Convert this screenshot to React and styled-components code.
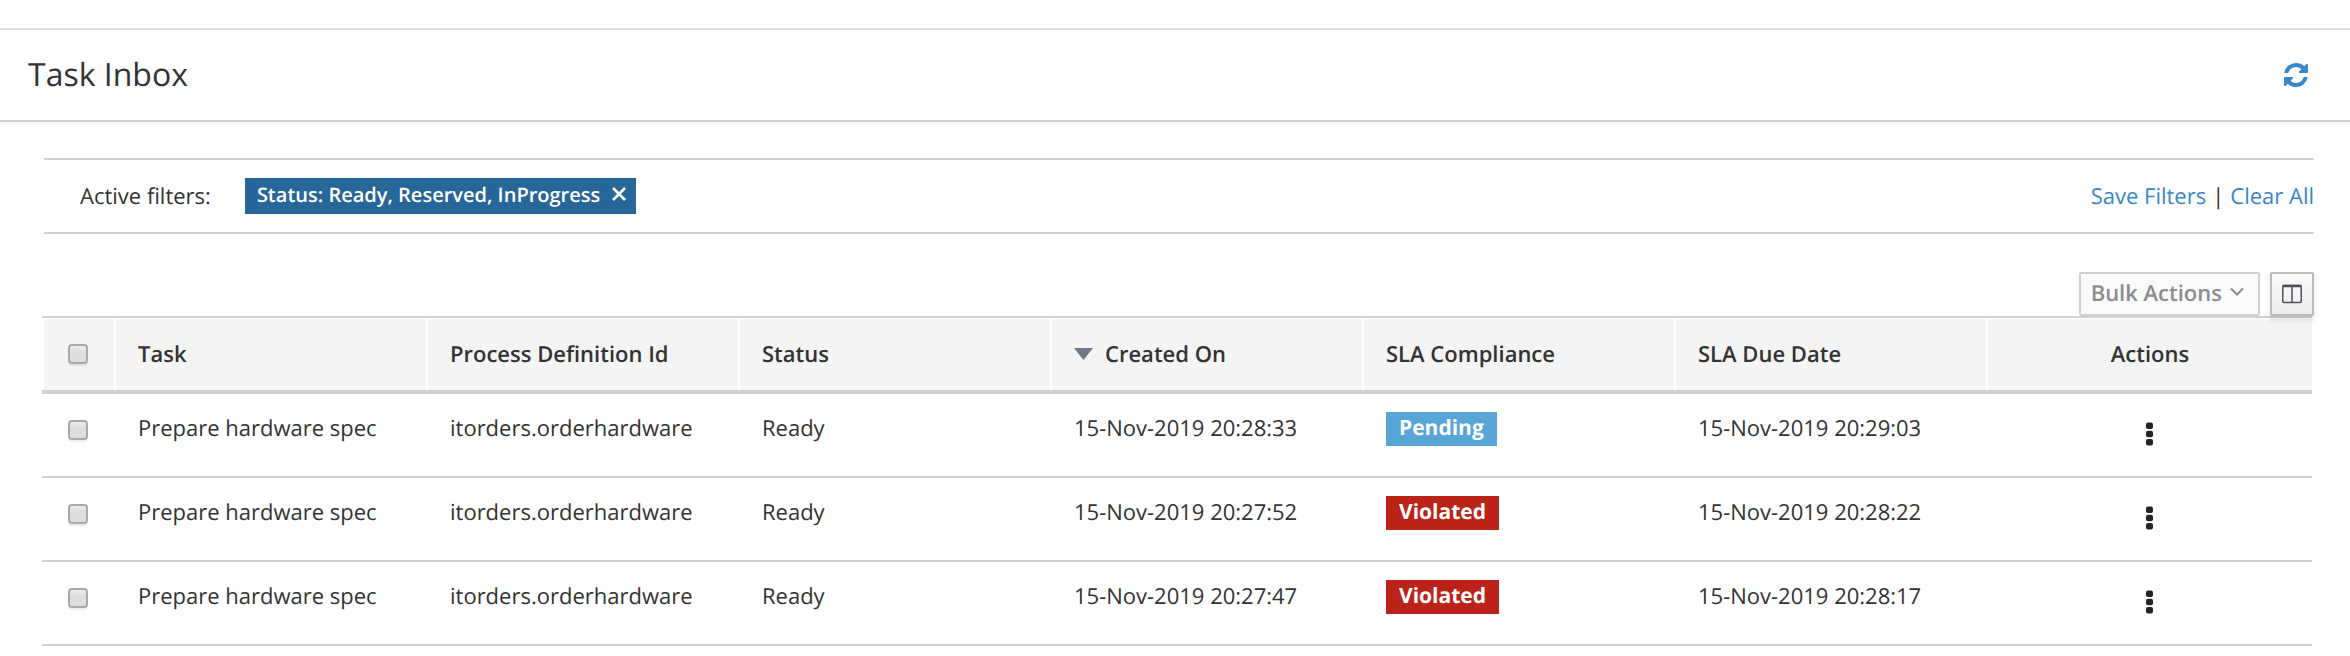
import React from "react";
import styled, { createGlobalStyle, css } from "styled-components";

const GlobalStyle = createGlobalStyle`
  * { box-sizing: border-box; }
  body {
    margin: 0;
    background: #fefefe;
    color: #333333;
    font-family: "Open Sans", "Noto Sans", sans-serif;
    font-size: 22px;
    line-height: 36px;
    text-rendering: geometricPrecision;
  }
  button { font: inherit; cursor: pointer; text-rendering: inherit; }
`;

const Page = styled.main`
  padding-top: 28px;
`;

const Header = styled.header`
  display: flex;
  align-items: center;
  justify-content: space-between;
  height: 94px;
  padding: 0 42px 0 28px;
  border-top: 2px solid #dddddd;
  border-bottom: 2px solid #d1d1d1;
  box-shadow: 0 2px 0 #f5f5f5;
`;

const Title = styled.h1`
  margin: 0;
  font-size: 32px;
  line-height: 40px;
  font-weight: 400;
`;

const PlainButton = styled.button`
  display: inline-flex;
  align-items: center;
  justify-content: center;
  padding: 0;
  border: 0;
  background: none;
  color: ${(p) => p.$color || "inherit"};
`;

const Filters = styled.section`
  display: flex;
  align-items: center;
  height: 76px;
  margin: 36px 36px 0 44px;
  padding-left: 36px;
  border-top: 2px solid #d1d1d1;
  border-bottom: 2px solid #d1d1d1;
`;

const Chip = styled.span`
  display: inline-flex;
  gap: 12px;
  height: 36px;
  margin-left: 34px;
  padding: 0 10px 0 12px;
  background: #276699;
  color: #fff;
  font-size: 20px;
  line-height: 34px;
  font-weight: 600;
`;

const CloseButton = styled(PlainButton)`
  height: 32px;
`;

const FilterLinks = styled.nav`
  display: flex;
  gap: 6px;
  margin-left: auto;
`;

const Link = styled.a`
  color: #3787c9;
  text-decoration: none;
`;

const Toolbar = styled.div`
  position: relative;
  display: flex;
  justify-content: flex-end;
  gap: 10px;
  margin: 38px 36px 0 42px;
`;

const ToolButton = styled.button`
  display: inline-flex;
  align-items: center;
  justify-content: center;
  gap: 8px;
  height: 44px;
  padding: 0 ${(p) => (p.$square ? "10px" : "14px 2px 10px")};
  border: 2px solid #bbbbbb;
  border-radius: 2px;
  background: linear-gradient(#fafafa, #ededed);
  box-shadow: 0 4px 6px rgba(3, 3, 3, 0.1);
  color: #4d5258;
  font-weight: 600;
  line-height: 36px;
  ${(p) => p.$square && css`width: 44px;`}
  &:disabled {
    border-color: #d1d1d1;
    background: #fafafa;
    box-shadow: none;
    color: #8b8d8f;
    cursor: default;
  }
`;

const TableArea = styled.div`
  padding: 0 38px 10px 42px;
`;

const Table = styled.table`
  width: 100%;
  table-layout: fixed;
  border-collapse: separate;
  border-spacing: 0;
`;

const CheckCol = styled.col`
  width: 72px;
`;

const ActionsCol = styled.col`
  width: 326px;
`;

const HeadCell = styled.th`
  height: 78px;
  padding: 0 ${(p) => (p.$center ? "22px" : "20px")} 1px 24px;
  border-top: 2px solid #d1d1d1;
  border-bottom: 4px solid #d1d1d1;
  background: linear-gradient(#fff, #fff) left / 2px 100% no-repeat, #f4f4f4;
  background-clip: padding-box;
  box-shadow: inset 0 1px 0 #fff;
  font-weight: 600;
  text-align: ${(p) => (p.$center ? "center" : "left")};
`;

const Cell = styled.td`
  height: 84px;
  padding: 16px ${(p) => (p.$center ? "24px" : "20px")} 0 24px;
  border-bottom: 2px solid #d1d1d1;
  vertical-align: top;
  text-align: ${(p) => (p.$center ? "center" : "left")};
`;

const SortLabel = styled.span`
  display: flex;
  align-items: center;
  gap: 12px;
`;

const Checkbox = styled.input.attrs({ type: "checkbox" })`
  appearance: none;
  display: block;
  width: 20px;
  height: 20px;
  margin: ${(p) => (p.$row ? "10px" : "0")} 0 0 2px;
  border: 2px solid #a9a9a9;
  border-radius: 4px;
  background: linear-gradient(#ededed, #dcdcdc 40%, #dedede);
  box-shadow: 0 2px 1px rgba(0, 0, 0, 0.08);
  &:checked { background: #3787c9; }
`;

const Badge = styled.span`
  display: inline-block;
  height: 34px;
  margin-top: 2px;
  padding: 0 13px;
  background: ${(p) => (p.$tone === "info" ? "#58a5d8" : "#bb2319")};
  color: #fff;
  font-size: 21px;
  line-height: 32px;
  font-weight: 700;
  vertical-align: top;
`;

const KebabButton = styled(PlainButton)`
  width: 28px;
  height: 36px;
  margin-top: 6px;
`;

const RefreshIcon = () => (
  <svg width="24" height="24" viewBox="0 0 1536 1536" fill="currentColor" aria-hidden="true">
    <path d="M1511 928q0 5-1 7-64 268-268 434.500t-478 166.500q-146 0-282.500-55t-243.500-157l-129 129q-19 19-45 19t-45-19-19-45v-448q0-26 19-45t45-19h448q26 0 45 19t19 45-19 45l-137 137q71 66 161 102t187 36q134 0 250-65t186-179q11-17 53-117 8-23 30-23h192q13 0 22.500 9.500t9.500 22.500zm25-800v448q0 26-19 45t-45 19h-448q-26 0-45-19t-19-45 19-45l138-138q-148-137-349-137-134 0-250 65t-186 179q-11 17-53 117-8 23-30 23h-199q-13 0-22.500-9.500t-9.500-22.500v-7q65-268 270-434.500t480-166.500q146 0 284 55.500t245 156.500l130-129q19-19 45-19t45 19 19 45z" />
  </svg>
);

const CloseIcon = () => (
  <svg width="14" height="14" viewBox="0 0 14 14" fill="none" stroke="currentColor" strokeWidth="2.6" aria-hidden="true">
    <path d="M1 1 13 13M13 1 1 13" />
  </svg>
);

const ChevronIcon = () => (
  <svg width="14" height="14" viewBox="0 0 14 14" fill="none" stroke="currentColor" strokeWidth="2" aria-hidden="true">
    <path d="M1 2.500 7 8.500 13 2.500" />
  </svg>
);

const ColumnsIcon = () => (
  <svg width="20" height="20" viewBox="0 0 20 20" fill="none" stroke="currentColor" aria-hidden="true">
    <rect x="0.750" y="1.500" width="18.500" height="17" rx="1.500" strokeWidth="1.500" />
    <path d="M0.500 2H19.500" strokeWidth="2.500" />
    <path d="M10 2V18.500" strokeWidth="1.500" />
  </svg>
);

const SortIcon = () => (
  <svg width="19" height="12" viewBox="0 0 19 12" fill="#6e7889" aria-hidden="true">
    <path d="M0 0H19L9.500 12Z" />
  </svg>
);

const KebabIcon = () => (
  <svg width="7" height="24" viewBox="0 0 7 24" fill="#222424" aria-hidden="true">
    {[0.5, 8.75, 17].map((y) => (
      <rect key={y} y={y} width="7" height="6.500" rx="2" />
    ))}
  </svg>
);

const TASKS = [
  { created: "15-Nov-2019 20:28:33", sla: "Pending", tone: "info", due: "15-Nov-2019 20:29:03" },
  { created: "15-Nov-2019 20:27:52", sla: "Violated", tone: "danger", due: "15-Nov-2019 20:28:22" },
  { created: "15-Nov-2019 20:27:47", sla: "Violated", tone: "danger", due: "15-Nov-2019 20:28:17" },
];

export default function App() {
  return (
    <Page>
      <GlobalStyle />
      <Header>
        <Title>Task Inbox</Title>
        <PlainButton $color="#3787c9" aria-label="Refresh">
          <RefreshIcon />
        </PlainButton>
      </Header>

      <Filters>
        <span>Active filters:</span>
        <Chip>
          Status: Ready, Reserved, InProgress
          <CloseButton aria-label="Remove filter">
            <CloseIcon />
          </CloseButton>
        </Chip>
        <FilterLinks>
          <Link href="#save">Save Filters</Link>
          <span>|</span>
          <Link href="#clear">Clear All</Link>
        </FilterLinks>
      </Filters>

      <Toolbar>
        <ToolButton disabled>
          Bulk Actions
          <ChevronIcon />
        </ToolButton>
        <ToolButton $square aria-label="Columns">
          <ColumnsIcon />
        </ToolButton>
      </Toolbar>

      <TableArea>
        <Table>
          <colgroup>
            <CheckCol />
            <col span="6" />
            <ActionsCol />
          </colgroup>
          <thead>
            <tr>
              <HeadCell><Checkbox aria-label="Select all tasks" /></HeadCell>
              <HeadCell>Task</HeadCell>
              <HeadCell>Process Definition Id</HeadCell>
              <HeadCell>Status</HeadCell>
              <HeadCell aria-sort="descending">
                <SortLabel><SortIcon />Created On</SortLabel>
              </HeadCell>
              <HeadCell>SLA Compliance</HeadCell>
              <HeadCell>SLA Due Date</HeadCell>
              <HeadCell $center>Actions</HeadCell>
            </tr>
          </thead>
          <tbody>
            {TASKS.map((task) => (
              <tr key={task.created}>
                <Cell><Checkbox $row aria-label="Select task" /></Cell>
                <Cell>Prepare hardware spec</Cell>
                <Cell>itorders.orderhardware</Cell>
                <Cell>Ready</Cell>
                <Cell>{task.created}</Cell>
                <Cell><Badge $tone={task.tone}>{task.sla}</Badge></Cell>
                <Cell>{task.due}</Cell>
                <Cell $center>
                  <KebabButton aria-label="Task actions"><KebabIcon /></KebabButton>
                </Cell>
              </tr>
            ))}
          </tbody>
        </Table>
      </TableArea>
    </Page>
  );
}
